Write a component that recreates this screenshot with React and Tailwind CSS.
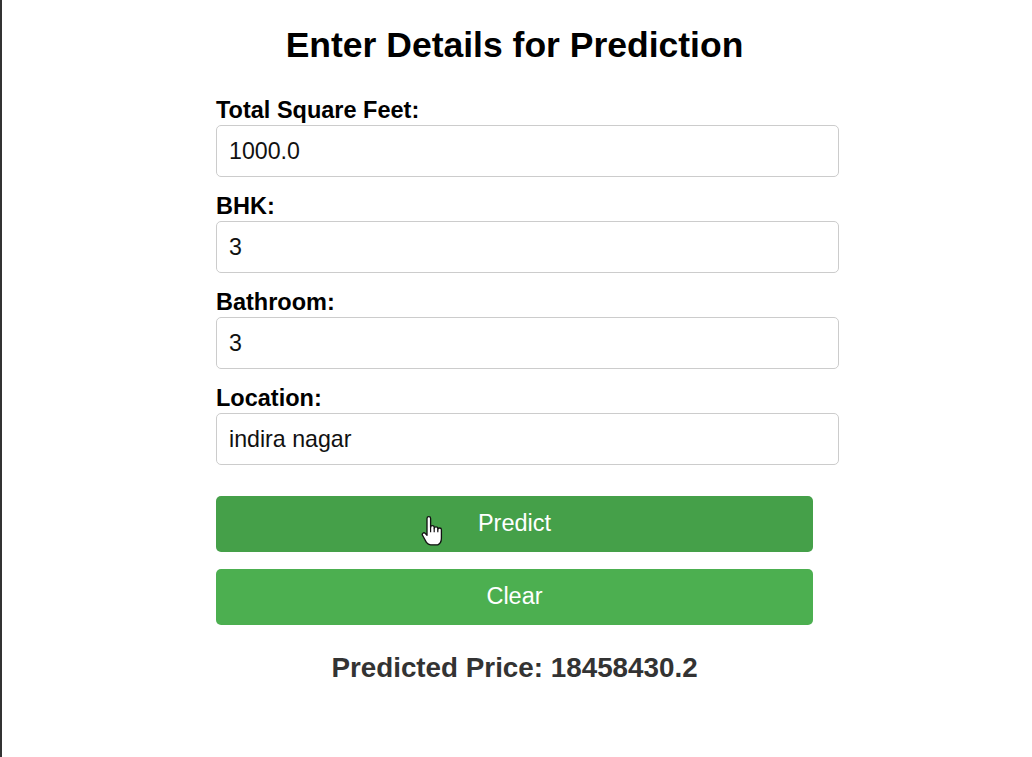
import { useState } from 'react'

const fields = [
  { id: 'sqft', label: 'Total Square Feet:', value: '1000.0' },
  { id: 'bhk', label: 'BHK:', value: '3' },
  { id: 'bath', label: 'Bathroom:', value: '3' },
  { id: 'location', label: 'Location:', value: 'indira nagar' },
]

function HandCursor() {
  return (
    <svg width="24" height="32" viewBox="0 0 20 26" className="absolute left-[205px] top-[19px] pointer-events-none">
      <path
        d="M5 2.5a1.5 1.5 0 0 1 3 0V10a1.5 1.5 0 0 1 3 0v1a1.5 1.5 0 0 1 3 0v1a1.5 1.5 0 0 1 3 0v7q0 4-3 5.5H8q-2 0-3.5-2L1.5 17a1.4 1.4 0 0 1 2-2L5 16.5Z"
        fill="#fff"
        stroke="#111"
        strokeWidth="1.1"
        strokeLinejoin="round"
      />
      <path d="M8 10v4M11 11v3M14 12v2" stroke="#111" strokeWidth="1" />
    </svg>
  )
}

export default function App() {
  const [values, setValues] = useState(
    Object.fromEntries(fields.map((f) => [f.id, f.value]))
  )

  return (
    <div className="min-h-[757px] border-l-2 border-[#333] bg-white font-['Liberation_Sans',Arial,sans-serif] text-black">
      <div className="ml-[214px] w-[597px] pt-[25px]">
        <h1 className="text-center text-[35.5px] font-bold leading-[41px]">Enter Details for Prediction</h1>

        <form className="mt-[31px]" onSubmit={(e) => e.preventDefault()}>
          {fields.map((f) => (
            <div key={f.id} className="mb-[16px]">
              <label htmlFor={f.id} className="block text-[23.5px] font-bold leading-[26px]">
                {f.label}
              </label>
              <input
                id={f.id}
                type="text"
                value={values[f.id]}
                onChange={(e) => setValues({ ...values, [f.id]: e.target.value })}
                className="mt-[2px] box-border h-[52px] w-[623px] rounded-[5px] border border-[#ccc] px-[12px] text-[23.2px] text-[#111] outline-none"
              />
            </div>
          ))}

          <div className="mt-[31px] flex flex-col gap-[17px]">
            <button
              type="submit"
              className="relative h-[56px] w-full rounded-[5px] bg-[#45a049] text-[23.5px] text-white"
            >
              Predict
              <HandCursor />
            </button>
            <button
              type="button"
              className="h-[56px] w-full rounded-[5px] bg-[#4caf50] text-[23.5px] text-white"
            >
              Clear
            </button>
          </div>
        </form>

        <p className="mt-[27px] text-center text-[27.8px] font-bold leading-[32px] text-[#333]">
          Predicted Price: 18458430.2
        </p>
      </div>
    </div>
  )
}
